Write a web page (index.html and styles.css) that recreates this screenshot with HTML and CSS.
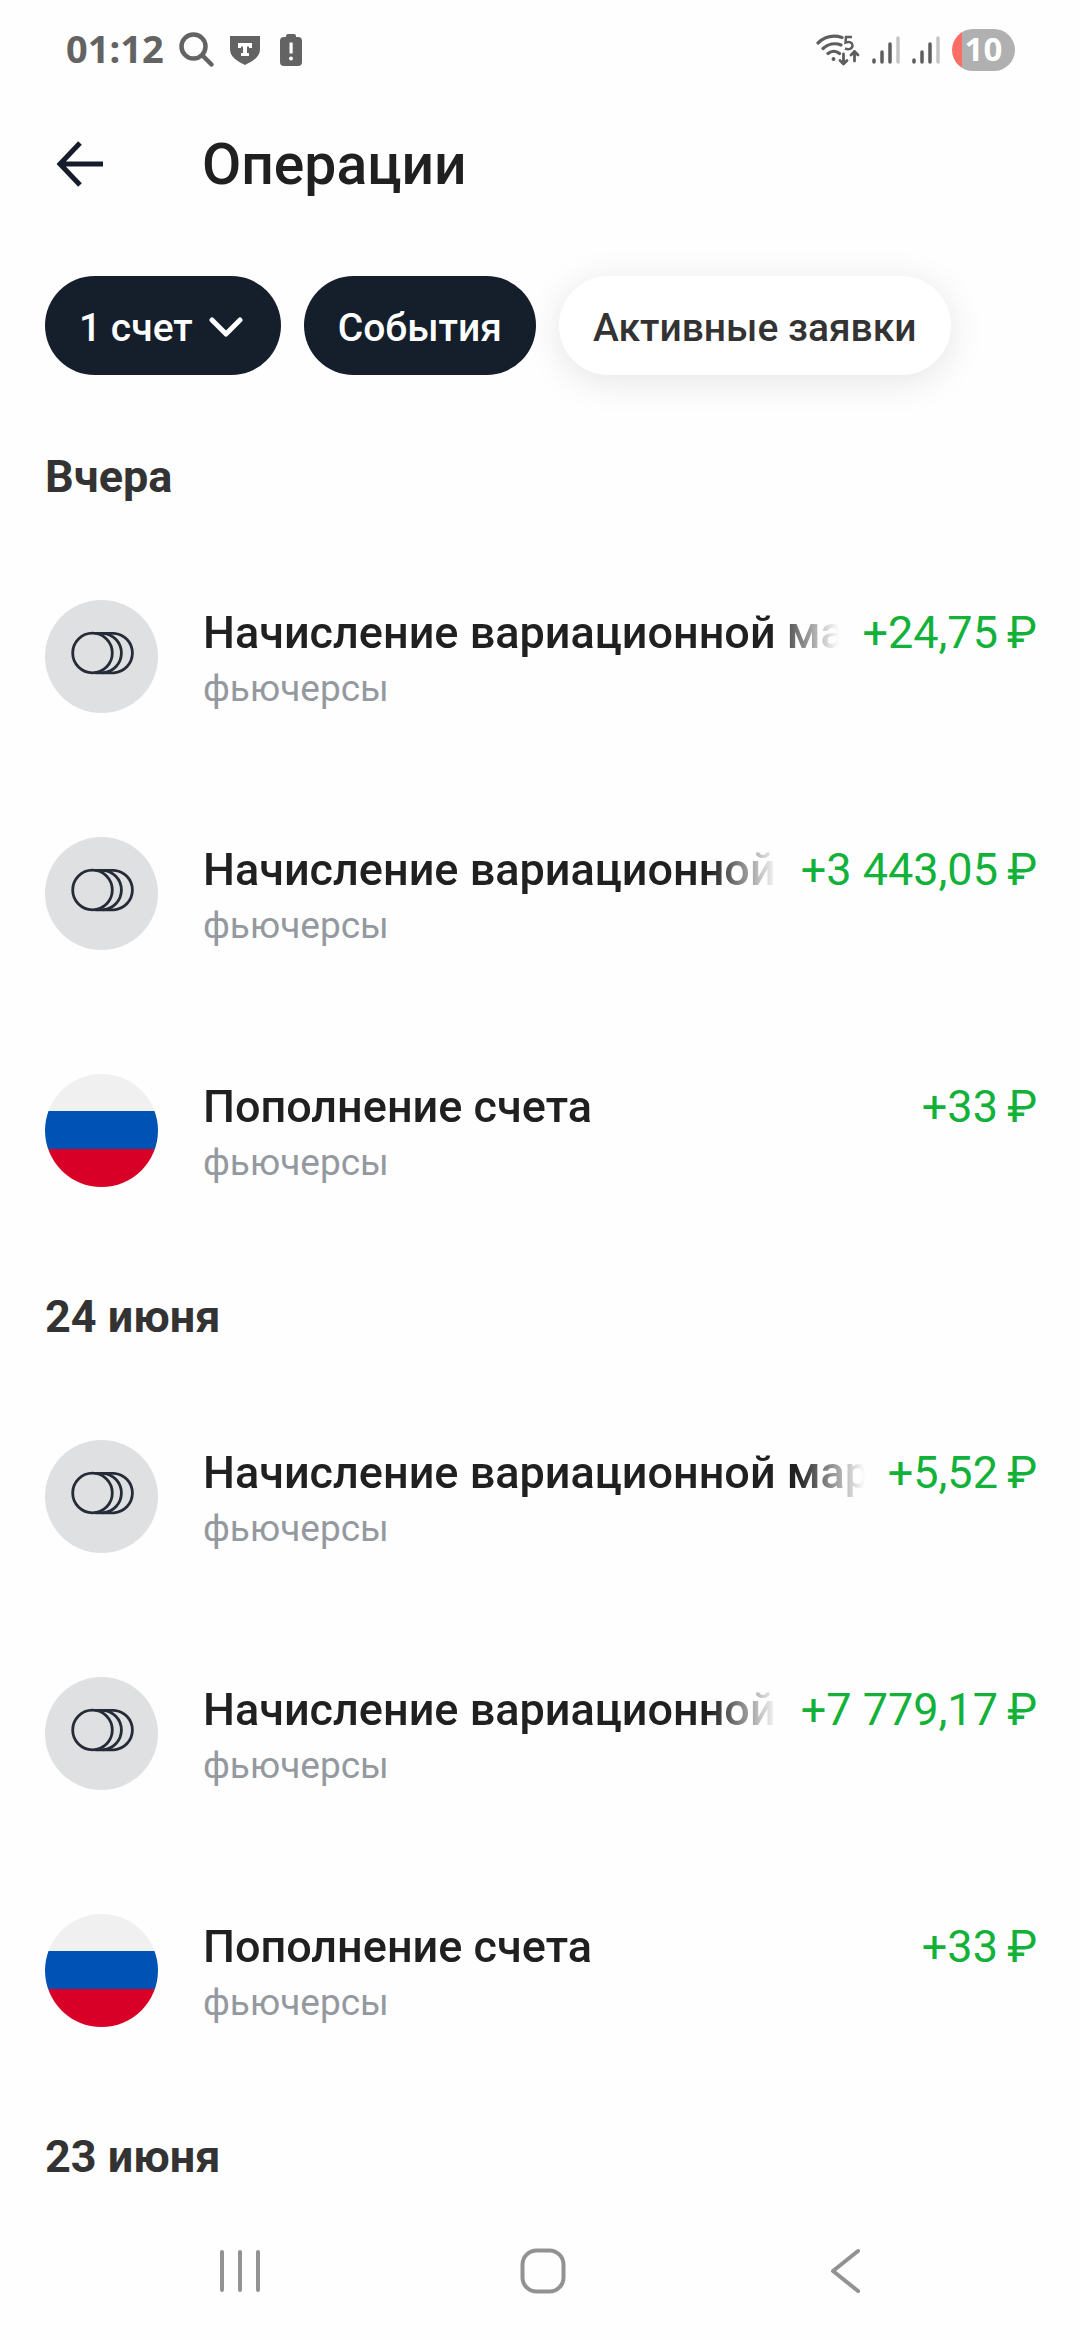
FILE: index.html
```html
<!DOCTYPE html>
<html lang="ru">
<head>
<meta charset="utf-8">
<meta name="viewport" content="width=device-width, initial-scale=1">
<title>Операции</title>
<link rel="stylesheet" href="styles.css">
</head>
<body>
<svg class="defs" width="0" height="0" aria-hidden="true">
  <symbol id="coins" viewBox="0 0 113 113">
    <g fill="none" stroke="#252c38" stroke-width="2.800">
      <circle cx="47.500" cy="53" r="19.800"/>
      <path d="M50 33.300h19a19.800 19.800 0 0 1 0 39.500H50"/>
      <path d="M58 33.300a19.800 19.800 0 0 1 0 39.500"/>
    </g>
  </symbol>
  <symbol id="signal" viewBox="0 0 28 30">
    <g stroke-width="3.500" stroke-linecap="round" stroke="#5e5e5e">
      <path d="M2 25v2M10 17v10M18 9v18"/>
      <path d="M26 3v24" stroke="#c6c6c6"/>
    </g>
  </symbol>
</svg>

<div class="screen">
  <div class="status">
    <div class="status-side">
      <span class="clock">01:12</span>
      <svg width="36" height="36" viewBox="0 0 36 36" fill="none" stroke="#636363" stroke-width="4.500" stroke-linecap="round"><circle cx="14.500" cy="14.500" r="12"/><path d="M23.500 23.500l9 9"/></svg>
      <svg class="shield" width="30" height="30" viewBox="0 0 30 30"><path d="M0 1h30v13c0 8-7 12-15 16C7 26 0 22 0 14z" fill="#636363"/><path d="M8 8h14v5h-3v-1.500h-2V18h2v3h-8v-3h2v-6.500h-2V13H8z" fill="#fff"/></svg>
      <svg width="24" height="34" viewBox="0 0 24 34"><path d="M7 4V3q0-2 2-2h6q2 0 2 2v1h2q4 0 4 4v21q0 4-4 4H5q-4 0-4-4V8q0-4 4-4z" fill="#636363"/><path d="M10.500 9.500h3.200v11h-3.200z" fill="#fff"/><circle cx="12" cy="25.500" r="2" fill="#fff"/></svg>
    </div>
    <div class="status-side status-right">
      <svg width="44" height="34" viewBox="0 0 44 34" fill="none" stroke="#5e5e5e" stroke-width="3.200" stroke-linecap="round"><path d="M2 10C9 3.500 18 2 26 4.500M7 15.500c5-4.500 12-6 18-3.500M12 20.500c3.500-3 8-3 11.500 0"/><circle cx="17.500" cy="26" r="1.200" fill="#5e5e5e" stroke-width="1.500"/><path d="M27.500 21v10M24 27.500l3.500 3.500 3.500-3.500M38.500 28V18.500M35 22l3.500-3.500L42 22" stroke-width="2.800" stroke-linejoin="round"/><path d="M36 4h-6l-.5 5.500c4-1.500 7 0 7 3 0 3.500-4 4.500-7.500 3" stroke-width="2.500" stroke-linecap="butt"/></svg>
      <svg width="28" height="30"><use href="#signal"/></svg>
      <svg width="28" height="30"><use href="#signal"/></svg>
      <span class="battery">10</span>
    </div>
  </div>

  <header class="bar">
    <button class="icon-button" aria-label="Назад"><svg width="48" height="48" viewBox="0 0 48 48" fill="none" stroke="#151c2b" stroke-width="5"><path d="M25 2L5 23l20 21M5 23h43"/></svg></button>
    <h1>Операции</h1>
  </header>

  <div class="chips">
    <button class="chip chip-dark">1 счет <svg class="chevron" width="34" height="22" viewBox="0 0 34 22" fill="none" stroke="#fff" stroke-width="5" stroke-linecap="round" stroke-linejoin="round"><path d="M3 3l14 14 14-14"/></svg></button>
    <button class="chip chip-dark">События</button>
    <button class="chip">Активные заявки</button>
  </div>

  <main>
    <section>
      <h2>Вчера</h2>
      <ul>
        <li><svg class="badge" viewBox="0 0 113 113"><use href="#coins"/></svg><div class="info"><div class="line"><span class="name">Начисление вариационной маржи</span><span class="sum">+24,75&#8201;₽</span></div><div class="sub">фьючерсы</div></div></li>
        <li><svg class="badge" viewBox="0 0 113 113"><use href="#coins"/></svg><div class="info"><div class="line"><span class="name">Начисление вариационной маржи</span><span class="sum">+3&nbsp;443,05&#8201;₽</span></div><div class="sub">фьючерсы</div></div></li>
        <li><span class="badge flag"></span><div class="info"><div class="line"><span class="name">Пополнение счета</span><span class="sum">+33&#8201;₽</span></div><div class="sub">фьючерсы</div></div></li>
      </ul>
    </section>
    <section>
      <h2>24 июня</h2>
      <ul>
        <li><svg class="badge" viewBox="0 0 113 113"><use href="#coins"/></svg><div class="info"><div class="line"><span class="name">Начисление вариационной маржи</span><span class="sum">+5,52&#8201;₽</span></div><div class="sub">фьючерсы</div></div></li>
        <li><svg class="badge" viewBox="0 0 113 113"><use href="#coins"/></svg><div class="info"><div class="line"><span class="name">Начисление вариационной маржи</span><span class="sum">+7&nbsp;779,17&#8201;₽</span></div><div class="sub">фьючерсы</div></div></li>
        <li><span class="badge flag"></span><div class="info"><div class="line"><span class="name">Пополнение счета</span><span class="sum">+33&#8201;₽</span></div><div class="sub">фьючерсы</div></div></li>
      </ul>
    </section>
    <section>
      <h2>23 июня</h2>
    </section>
  </main>

  <nav class="system">
    <button class="icon-button" aria-label="Недавние"><svg width="48" height="48" viewBox="0 0 48 48" fill="none" stroke="#929292" stroke-width="4" stroke-linecap="round"><path d="M6 5v38M24 5v38M42 5v38"/></svg></button>
    <button class="icon-button" aria-label="Домой"><svg width="48" height="48" viewBox="0 0 48 48" fill="none" stroke="#929292" stroke-width="4"><rect x="3.500" y="3.500" width="41" height="41" rx="14"/></svg></button>
    <button class="icon-button" aria-label="Назад"><svg width="48" height="48" viewBox="0 0 48 48" fill="none" stroke="#929292" stroke-width="4" stroke-linecap="round" stroke-linejoin="round"><path d="M37 4L12 24l25 20"/></svg></button>
  </nav>
</div>
</body>
</html>
```
FILE: styles.css
```css
* {
  box-sizing: border-box;
}

body {
  margin: 0;
  background: #fefefe;
  color: #202020;
  font-family: Roboto, "Noto Sans", sans-serif;
}

h1, h2, ul {
  margin: 0;
  padding: 0;
}

button {
  border: 0;
  padding: 0;
  background: none;
  color: inherit;
  font: inherit;
}

svg {
  display: block;
  flex: none;
}

.defs {
  position: absolute;
}

.screen {
  display: flex;
  flex-direction: column;
  min-height: 100vh;
}

.status {
  display: flex;
  justify-content: space-between;
  align-items: center;
  height: 100px;
  padding: 0 65px 0 66px;
}

.status-side {
  display: flex;
  align-items: center;
  gap: 15px;
  color: #636363;
  font-family: "Noto Sans", sans-serif;
  font-weight: 700;
}

.clock {
  font-size: 38px;
  line-height: 48px;
  padding-bottom: 4px;
}

.shield {
  margin-right: 4px;
}

.status-right {
  gap: 12px;
}

.battery {
  width: 63px;
  height: 42px;
  border-radius: 21px;
  background: linear-gradient(to right, #fa6e66 10px, #b0b0b0 10px);
  color: #fff;
  font-size: 33px;
  line-height: 40px;
  text-align: center;
}

.bar {
  display: flex;
  align-items: center;
  gap: 99px;
  height: 130px;
  padding: 0 55px;
}

.icon-button {
  display: flex;
}

h1 {
  font-size: 57px;
  font-weight: 500;
  line-height: 66px;
}

.chips {
  display: flex;
  gap: 23px;
  padding: 46px 45px 37px;
}

.chip {
  display: flex;
  align-items: center;
  gap: 16px;
  height: 99px;
  padding: 4px 34px 0;
  border-radius: 50px;
  background: #fff;
  box-shadow: 0 6px 36px rgba(0, 0, 0, 0.1);
  color: #333;
  font-size: 39px;
  font-weight: 500;
  white-space: nowrap;
}

.chip-dark {
  background: #151e2b;
  box-shadow: none;
  color: #fff;
}

.chevron {
  margin-right: 4px;
}

h2 {
  padding: 0 45px;
  color: #333;
  font-size: 45px;
  font-weight: 700;
  line-height: 129px;
}

ul {
  list-style: none;
}

li {
  display: flex;
  gap: 45px;
  padding: 59px 43px 65px 45px;
}

.badge {
  flex: none;
  width: 113px;
  height: 113px;
  border-radius: 50%;
  background: #dee0e2;
}

.flag {
  background: linear-gradient(#f0f0f0 37px, #0052b4 37px, #0052b4 75px, #d80027 75px);
}

.info {
  flex: 1;
  min-width: 0;
}

.line {
  display: flex;
  gap: 23px;
  font-size: 45px;
  line-height: 66px;
  white-space: nowrap;
}

.name {
  flex: 1;
  min-width: 0;
  overflow: hidden;
  font-weight: 500;
  -webkit-mask-image: linear-gradient(to left, transparent, #000 68px);
  mask-image: linear-gradient(to left, transparent, #000 68px);
}

.sum {
  color: #12b139;
}

.sub {
  color: #94999f;
  font-size: 37px;
  line-height: 46px;
}

.system {
  display: flex;
  justify-content: space-between;
  align-items: center;
  height: 119px;
  margin-top: auto;
  padding: 0 19.5% 19px 20%;
}
```
